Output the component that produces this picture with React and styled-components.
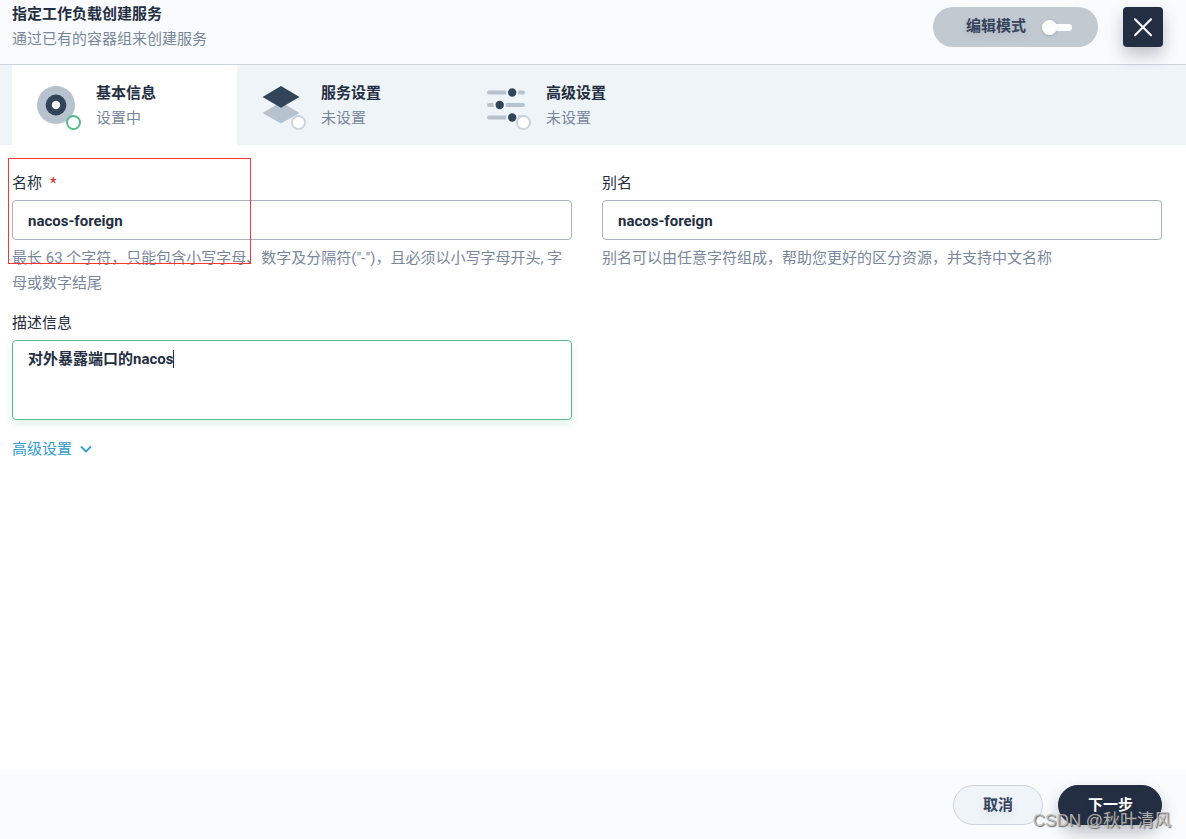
import React, { useState } from 'react';
import styled, { createGlobalStyle } from 'styled-components';

const GlobalStyle = createGlobalStyle`
  * {
    box-sizing: border-box;
  }

  body {
    margin: 0;
    background-color: #fff;
    color: #242e42;
    font-family: Roboto, 'Noto Sans CJK SC', sans-serif;
    font-size: 15px;
    line-height: 25px;
  }

  button, input, textarea {
    font-family: inherit;
    font-size: inherit;
  }
`;

const Page = styled.div`
  position: relative;
  display: flex;
  flex-direction: column;
  min-height: 100vh;
  overflow: hidden;
`;

const Header = styled.header`
  position: relative;
  z-index: 1;
  display: flex;
  justify-content: space-between;
  padding: 2px 23px 12px 12px;
  background-color: #f9fbfd;
  border-bottom: 1px solid #ccd3db;
`;

const Title = styled.h1`
  margin: 0;
  font-size: 15px;
  font-weight: 700;
`;

const Muted = styled.p`
  margin: 0;
  color: #79879c;
`;

const Actions = styled.div`
  display: flex;
  gap: 25px;
  padding-top: 5px;
`;

const ModeButton = styled.button`
  display: flex;
  align-items: center;
  gap: 16px;
  height: 40px;
  padding: 0 26px 0 33px;
  border: none;
  border-radius: 20px;
  background-color: #c1c9d1;
  color: #36435c;
  font-weight: 700;
  line-height: 20px;
  text-shadow: 0 4px 8px rgba(36, 46, 66, 0.1);
  cursor: pointer;
`;

const ModeText = styled.span`
  padding-bottom: 2px;
`;

const Switch = styled.span`
  display: flex;
  align-items: center;
  width: 30px;
  height: 7px;
  border-radius: 4px;
  background-color: #fff;

  &::before {
    content: '';
    width: 15px;
    height: 15px;
    border-radius: 50%;
    background-color: #fff;
    box-shadow: 0 1px 3px rgba(36, 46, 66, 0.2);
    flex-shrink: 0;
    margin-left: ${(props) => (props.$on ? '15px' : '0')};
  }
`;

const CloseButton = styled.button`
  width: 40px;
  height: 40px;
  padding: 0;
  border: none;
  border-radius: 4px;
  background-color: #242e42;
  box-shadow: 0 8px 16px rgba(36, 46, 66, 0.28);
  cursor: pointer;

  svg {
    display: block;
  }
`;

const Steps = styled.nav`
  display: flex;
  padding: 0 12px;
  background-color: #eff4f9;
`;

const Step = styled.button`
  display: flex;
  align-items: center;
  gap: 20px;
  width: 225px;
  height: 80px;
  padding: 0 24px;
  border: none;
  background-color: ${(props) => (props.$active ? '#fff' : 'transparent')};
  line-height: 25px;
  text-align: left;
  cursor: pointer;
`;

const StepIcon = styled.span`
  position: relative;
  width: 40px;
  height: 40px;

  svg {
    display: block;
  }
`;

const Dot = styled.span`
  position: absolute;
  top: 30px;
  left: 30px;
  width: 15px;
  height: 15px;
  border: 2px solid ${(props) => (props.$active ? '#55bc8a' : '#ccd3db')};
  border-radius: 50%;
  background-color: #fff;
`;

const StepText = styled.span`
  padding-top: 2px;
`;

const StepName = styled.span`
  display: block;
  color: #242e42;
  font-weight: 700;
`;

const StepState = styled.span`
  display: block;
  color: #79879c;
`;

const Form = styled.form`
  flex: 1;
  display: grid;
  grid-template-columns: 1fr 1fr;
  align-content: start;
  gap: 17px 30px;
  padding: 28px 24px 28px 12px;
`;

const Field = styled.div`
  display: flex;
  flex-direction: column;
`;

const Label = styled.label`
  margin-bottom: 7px;
  line-height: 20px;
`;

const Required = styled.span`
  margin-left: 8px;
  color: #ca2621;
`;

const Input = styled.input`
  width: 100%;
  height: 40px;
  padding: 2px 15px 0;
  border: 1px solid #abb4be;
  border-radius: 4px;
  background-color: #fff;
  color: #242e42;
  font-weight: 700;
  outline: none;
`;

const Help = styled(Muted)`
  margin-top: 6px;
`;

const TextBox = styled.div`
  position: relative;
  height: 80px;
`;

const TextArea = styled.textarea`
  display: block;
  width: 100%;
  height: 100%;
  padding: 8px 15px;
  border: 1px solid #55bc8a;
  border-radius: 4px;
  box-shadow: 0 4px 8px rgba(85, 188, 138, 0.2);
  color: #242e42;
  font-weight: 700;
  line-height: 20px;
  resize: none;
  outline: none;
`;

const Caret = styled.span`
  position: absolute;
  top: 10px;
  left: 161px;
  width: 1px;
  height: 18px;
  background-color: #242e42;
`;

const MoreButton = styled.button`
  display: flex;
  align-items: center;
  align-self: flex-start;
  gap: 6px;
  margin-top: 19px;
  padding: 0;
  border: none;
  background: none;
  color: #329dce;
  line-height: 20px;
  cursor: pointer;
`;

const Footer = styled.footer`
  display: flex;
  justify-content: flex-end;
  gap: 15px;
  padding: 15px 24px 14px;
  background-color: #f9fbfd;
`;

const Button = styled.button`
  height: 40px;
  padding: 0 ${(props) => (props.$primary ? '28px' : '29px')} 3px 29px;
  border: 1px solid ${(props) => (props.$primary ? '#242e42' : '#ccd3db')};
  border-radius: 20px;
  background-color: ${(props) => (props.$primary ? '#242e42' : '#eff4f9')};
  box-shadow: ${(props) => (props.$primary ? '0 8px 16px rgba(36, 46, 66, 0.28)' : 'none')};
  color: ${(props) => (props.$primary ? '#fff' : '#36435c')};
  font-weight: 700;
  text-shadow: 0 4px 8px rgba(36, 46, 66, 0.1);
  cursor: pointer;
`;

const Highlight = styled.div`
  position: absolute;
  top: 158px;
  left: 8px;
  width: 243px;
  height: 106px;
  border: 1px solid #f93636;
  pointer-events: none;
`;

const Watermark = styled.div`
  position: absolute;
  right: 15px;
  bottom: 6px;
  color: rgba(190, 190, 190, 0.9);
  font-family: 'Liberation Sans', 'Noto Sans CJK SC', sans-serif;
  font-size: 17px;
  text-shadow: 1px 1px 1px rgba(70, 70, 70, 0.8);
  pointer-events: none;
`;

const BasicIcon = () => (
  <svg width="40" height="40" viewBox="0 0 40 40">
    <circle cx="20" cy="20" r="19" fill="#b6c2cd" />
    <circle cx="20" cy="20" r="10.4" fill="#324558" />
    <circle cx="20" cy="20" r="4.2" fill="#fff" />
  </svg>
);

const ServiceIcon = () => (
  <svg width="40" height="40" viewBox="0 0 40 40">
    <path d="M20 17 38.5 28 20 38.5 1.5 28Z" fill="#b6c2cd" />
    <path d="M20 1 38.5 12 20 22.7 1.5 12Z" fill="#324558" />
  </svg>
);

const SlidersIcon = () => (
  <svg width="40" height="40" viewBox="0 0 40 40">
    <g stroke="#b6c2cd" strokeWidth="4" strokeLinecap="round">
      <path d="M3 7.5H37M3 20H37M3 32.5H37" />
    </g>
    <g fill="#324558" stroke="#eff4f9" strokeWidth="2">
      <circle cx="26.2" cy="7.5" r="5.2" />
      <circle cx="13.7" cy="20" r="5.2" />
      <circle cx="26.2" cy="32.5" r="5.2" />
    </g>
  </svg>
);

const steps = [
  { key: 'basic', name: '基本信息', state: '设置中', Icon: BasicIcon },
  { key: 'service', name: '服务设置', state: '未设置', Icon: ServiceIcon },
  { key: 'advanced', name: '高级设置', state: '未设置', Icon: SlidersIcon },
];

const App = () => {
  const [editMode, setEditMode] = useState(false);
  const [name, setName] = useState('nacos-foreign');
  const [alias, setAlias] = useState('nacos-foreign');
  const [description, setDescription] = useState('对外暴露端口的nacos');

  return (
    <Page lang="zh-CN">
      <GlobalStyle />
      <Header>
        <div>
          <Title>指定工作负载创建服务</Title>
          <Muted>通过已有的容器组来创建服务</Muted>
        </div>
        <Actions>
          <ModeButton type="button" aria-pressed={editMode} onClick={() => setEditMode(!editMode)}>
            <ModeText>编辑模式</ModeText>
            <Switch $on={editMode} />
          </ModeButton>
          <CloseButton type="button" aria-label="关闭">
            <svg width="40" height="40" viewBox="0 0 40 40">
              <path d="M12 12.3 28 28.3M28 12.3 12 28.3" stroke="#f4f5f7" strokeWidth="2.2" strokeLinecap="round" />
            </svg>
          </CloseButton>
        </Actions>
      </Header>

      <Steps>
        {steps.map(({ key, name: stepName, state, Icon }) => (
          <Step key={key} type="button" $active={key === 'basic'}>
            <StepIcon>
              <Icon />
              <Dot $active={key === 'basic'} />
            </StepIcon>
            <StepText>
              <StepName>{stepName}</StepName>
              <StepState>{state}</StepState>
            </StepText>
          </Step>
        ))}
      </Steps>

      <Form onSubmit={(event) => event.preventDefault()}>
        <Field>
          <Label htmlFor="name">
            名称<Required>*</Required>
          </Label>
          <Input id="name" type="text" value={name} onChange={(e) => setName(e.target.value)} />
          <Help>最长 63 个字符，只能包含小写字母、数字及分隔符("-")，且必须以小写字母开头, 字母或数字结尾</Help>
        </Field>
        <Field>
          <Label htmlFor="alias">别名</Label>
          <Input id="alias" type="text" value={alias} onChange={(e) => setAlias(e.target.value)} />
          <Help>别名可以由任意字符组成，帮助您更好的区分资源，并支持中文名称</Help>
        </Field>
        <Field>
          <Label htmlFor="description">描述信息</Label>
          <TextBox>
            <TextArea
              id="description"
              value={description}
              onChange={(e) => setDescription(e.target.value)}
            />
            <Caret />
          </TextBox>
          <MoreButton type="button">
            高级设置
            <svg width="16" height="16" viewBox="0 0 16 16" fill="none">
              <path d="M3 5.5 8 10.5 13 5.5" stroke="#329dce" strokeWidth="1.8" />
            </svg>
          </MoreButton>
        </Field>
      </Form>

      <Footer>
        <Button type="button">取消</Button>
        <Button type="button" $primary>下一步</Button>
      </Footer>

      <Highlight />
      <Watermark>CSDN @秋叶清风</Watermark>
    </Page>
  );
};

export default App;
